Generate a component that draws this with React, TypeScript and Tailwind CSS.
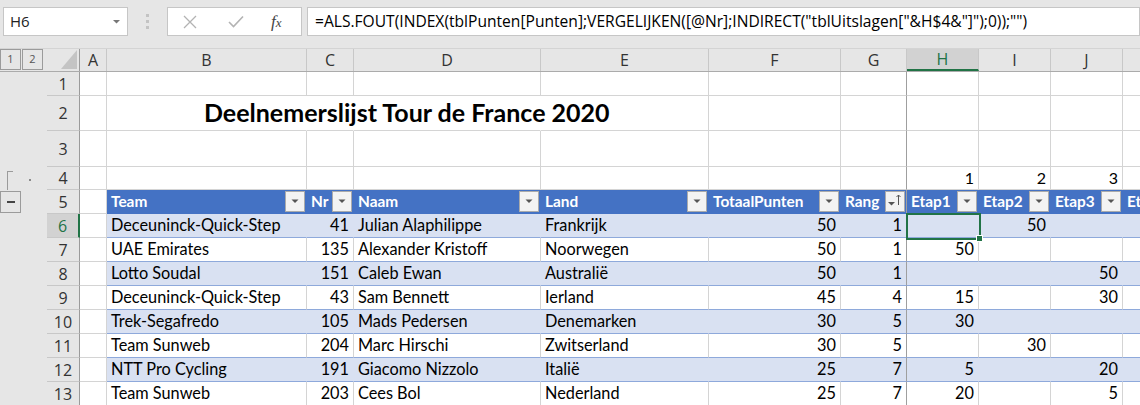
import { ReactNode } from "react";

type Val = string | number | null;

const colW = [
  "w-[27px]",
  "w-[200px]",
  "w-[47px]",
  "w-[187px]",
  "w-[168px]",
  "w-[132px]",
  "w-[66px]",
  "w-[72px]",
  "w-[72px]",
  "w-[72px]",
  "w-[90px]",
];
const letters = ["A", "B", "C", "D", "E", "F", "G", "H", "I", "J", "K"];

const ui = "font-['Open_Sans',sans-serif]";
const cal = "font-['Lato',sans-serif]";

const headers = ["Team", "Nr", "Naam", "Land", "TotaalPunten", "Rang", "Etap1", "Etap2", "Etap3", "Etap4"];

const data: Val[][] = [
  ["Deceuninck-Quick-Step", 41, "Julian Alaphilippe", "Frankrijk", 50, 1, null, 50, null],
  ["UAE Emirates", 135, "Alexander Kristoff", "Noorwegen", 50, 1, 50, null, null],
  ["Lotto Soudal", 151, "Caleb Ewan", "Australië", 50, 1, null, null, 50],
  ["Deceuninck-Quick-Step", 43, "Sam Bennett", "Ierland", 45, 4, 15, null, 30],
  ["Trek-Segafredo", 105, "Mads Pedersen", "Denemarken", 30, 5, 30, null, null],
  ["Team Sunweb", 204, "Marc Hirschi", "Zwitserland", 30, 5, null, 30, null],
  ["NTT Pro Cycling", 191, "Giacomo Nizzolo", "Italië", 25, 7, 5, null, 20],
  ["Team Sunweb", 203, "Cees Bol", "Nederland", 25, 7, 20, null, 5],
];

// right border colour: G carries the freeze-pane line
const gridR = (i: number) => (i === 6 ? "border-r-[#9f9f9f]" : "border-r-[#d4d4d4]");

const Cell = ({ i, className = "", children }: { i: number; className?: string; children?: ReactNode }) => (
  <div className={`${colW[i]} shrink-0 h-full border-r border-b flex items-center whitespace-nowrap ${className}`}>
    {children}
  </div>
);

const Row = ({
  n,
  h,
  sel,
  outline,
  children,
}: {
  n: number;
  h: string;
  sel?: boolean;
  outline?: ReactNode;
  children: ReactNode;
}) => (
  <div className={`flex ${h}`}>
    <div className="w-[47px] shrink-0 h-full bg-[#e6e6e6] relative">{outline}</div>
    <div
      className={`w-[33px] shrink-0 h-full border-b border-b-[#c8c8c8] flex items-center justify-center text-[16px] ${ui} ${
        sel
          ? "border-r-2 border-r-[#217346] bg-[#d2d2d2] text-[#217346]"
          : "border-r border-r-[#9b9b9b] bg-[#e6e6e6] text-[#333]"
      }`}
    >
      {n}
    </div>
    {children}
  </div>
);

const FilterBtn = ({ sort }: { sort?: boolean }) => (
  <div className="ml-auto mr-[1px] w-[20px] h-[21px] shrink-0 border border-[#ababab] bg-[#f3f3f3]">
    <svg width="18" height="19" viewBox="0 0 18 19">
      {sort ? (
        <>
          <polygon points="2,10 9,10 5.5,13.5" fill="#555" />
          <line x1="12.5" y1="3" x2="12.5" y2="13" stroke="#555" strokeWidth="1" />
          <polyline points="10.5,5 12.5,3 14.5,5" fill="none" stroke="#555" strokeWidth="1" />
        </>
      ) : (
        <polygon points="5.5,7.5 12.5,7.5 9,11" fill="#555" />
      )}
    </svg>
  </div>
);

const TopBar = () => (
  <div className="h-[49px] bg-[#e6e6e6] border-b border-[#d4d4d4] flex pt-[7px]">
    <div className="ml-[3px] w-[125px] h-[29px] bg-white border border-[#c6c6c6] flex items-center pl-[6px] pr-[7px]">
      <span className={`text-[15px] text-[#222] ${ui}`}>H6</span>
      <svg className="ml-auto" width="7" height="4" viewBox="0 0 7 4">
        <polygon points="0,0 7,0 3.5,3.5" fill="#777" />
      </svg>
    </div>
    <div className="w-[39px] h-[29px] flex flex-col items-center justify-center gap-[3px]">
      <div className="w-[3px] h-[3px] bg-[#c3c3c3]" />
      <div className="w-[3px] h-[3px] bg-[#c3c3c3]" />
      <div className="w-[3px] h-[3px] bg-[#c3c3c3]" />
    </div>
    <div className="w-[135px] h-[29px] bg-white border border-[#c6c6c6] flex items-center">
      <svg className="ml-[15px]" width="14" height="14" viewBox="0 0 14 14">
        <path d="M1 1 L13 13 M13 1 L1 13" stroke="#b3b3b3" strokeWidth="1.3" />
      </svg>
      <svg className="ml-[31px]" width="16" height="13" viewBox="0 0 16 13">
        <path d="M1 7 L5.5 11.5 L15 1.5" stroke="#b3b3b3" strokeWidth="1.6" fill="none" />
      </svg>
      <span className="ml-[27px] text-[17px] italic text-[#444] font-['Liberation_Serif',serif] leading-none">
        f<span className="text-[13px]">x</span>
      </span>
    </div>
    <div className="ml-[5px] flex-1 h-[29px] bg-white border border-[#c6c6c6] flex items-center pl-[7px] overflow-hidden">
      <span className={`text-[15.6px] text-black whitespace-nowrap ${ui}`}>
        =ALS.FOUT(INDEX(tblPunten[Punten];VERGELIJKEN([@Nr];INDIRECT("tblUitslagen["&amp;H$4&amp;"]");0));"")
      </span>
    </div>
  </div>
);

const ColHeaders = () => (
  <div className="flex h-[23px] border-b border-[#ababab]">
    <div className="w-[47px] shrink-0 h-full bg-[#e6e6e6] flex">
      <div className={`w-[21px] h-[21px] border border-[#9b9b9b] flex items-center justify-center text-[11px] text-[#555] ${ui}`}>
        1
      </div>
      <div className={`ml-[1px] w-[21px] h-[21px] border border-[#9b9b9b] flex items-center justify-center text-[11px] text-[#555] ${ui}`}>
        2
      </div>
    </div>
    <div className="w-[33px] shrink-0 h-full bg-[#e6e6e6] border-r border-[#9b9b9b] flex items-end">
      <svg className="ml-[14px] mb-[2px]" width="16" height="19" viewBox="0 0 16 19">
        <polygon points="16,0 16,19 0,19" fill="#c4c4c4" />
      </svg>
    </div>
    {letters.map((l, i) => (
      <div
        key={l}
        className={`${colW[i]} shrink-0 h-full border-r border-[#c8c8c8] flex items-center justify-center text-[16px] ${ui} ${
          l === "H" ? "bg-[#d2d2d2] text-[#217346] border-b-2 border-b-[#217346]" : "bg-[#e6e6e6] text-[#333]"
        }`}
      >
        {l === "K" ? null : l}
      </div>
    ))}
  </div>
);

const EmptyCells = () => (
  <>
    {letters.map((l, i) => (
      <Cell key={l} i={i} className={`${gridR(i)} border-b-[#d4d4d4]`} />
    ))}
  </>
);

export default function App() {
  return (
    <div className={`w-[1140px] h-[405px] overflow-hidden bg-white text-black ${cal}`}>
      <TopBar />
      <ColHeaders />

      <Row n={1} h="h-[24px]">
        <EmptyCells />
      </Row>

      <Row n={2} h="h-[35px]">
        {letters.map((l, i) => {
          if (i === 1)
            return (
              <Cell key={l} i={i} className="relative z-10 border-r-transparent border-b-[#d4d4d4] pl-[97px] text-[25px] font-bold">
                Deelnemerslijst Tour de France 2020
              </Cell>
            );
          const r = i === 2 || i === 3 ? "border-r-transparent" : gridR(i);
          return <Cell key={l} i={i} className={`${r} border-b-[#d4d4d4]`} />;
        })}
      </Row>

      <Row n={3} h="h-[36px]">
        <EmptyCells />
      </Row>

      <Row
        n={4}
        h="h-[23px]"
        outline={
          <>
            <div className="absolute left-[7px] top-[4px] w-[6px] h-[19px] border-l border-t border-[#9b9b9b]" />
            <div className="absolute left-[29px] top-[12px] w-[2px] h-[2px] bg-[#8a8a8a]" />
          </>
        }
      >
        {letters.map((l, i) => (
          <Cell key={l} i={i} className={`${gridR(i)} border-b-[#d4d4d4] justify-end pr-[4px] text-[16px]`}>
            {i === 7 ? 1 : i === 8 ? 2 : i === 9 ? 3 : null}
          </Cell>
        ))}
      </Row>

      <Row
        n={5}
        h="h-[24px]"
        outline={
          <div className="absolute left-0 top-[1px] w-[21px] h-[22px] border border-[#9b9b9b] flex items-center justify-center">
            <div className="w-[8px] h-[1.5px] bg-[#444]" />
          </div>
        }
      >
        <Cell i={0} className="border-r-[#d4d4d4] border-b-[#d4d4d4]" />
        {headers.map((t, k) => {
          const i = k + 1;
          return (
            <Cell
              key={t}
              i={i}
              className={`bg-[#4472c4] border-b-[#4472c4] ${i === 6 ? "border-r-[#9f9f9f]" : "border-r-[#4472c4]"} pl-[4px] text-white font-bold text-[15.4px] overflow-hidden`}
            >
              <span>{t}</span>
              {i < 10 && <FilterBtn sort={t === "Rang"} />}
            </Cell>
          );
        })}
      </Row>

      {data.map((r, idx) => {
        const n = idx + 6;
        const band = idx % 2 === 0;
        return (
          <Row key={n} n={n} h="h-[24px]" sel={n === 6}>
            <Cell i={0} className="border-r-[#d4d4d4] border-b-[#d4d4d4]" />
            {[...r, null].map((v, k) => {
              const i = k + 1;
              const right = i === 6 ? "border-r-[#9f9f9f]" : band ? "border-r-[#d9e1f2]" : "border-r-[#d4d4d4]";
              const num = typeof v === "number";
              return (
                <Cell
                  key={i}
                  i={i}
                  className={`${band ? "bg-[#d9e1f2]" : ""} ${right} border-b-[#8ea9db] text-[16.3px] ${
                    num ? "justify-end pr-[4px]" : "pl-[4px]"
                  } ${n === 6 && i === 7 ? "relative" : ""}`}
                >
                  {v}
                  {n === 6 && i === 7 && (
                    <div className="absolute left-[-1px] top-[-1px] w-[75px] h-[27px] border-2 border-[#217346] z-10">
                      <div className="absolute right-[-4px] bottom-[-4px] w-[7px] h-[7px] bg-[#217346] border border-white" />
                    </div>
                  )}
                </Cell>
              );
            })}
          </Row>
        );
      })}
    </div>
  );
}
